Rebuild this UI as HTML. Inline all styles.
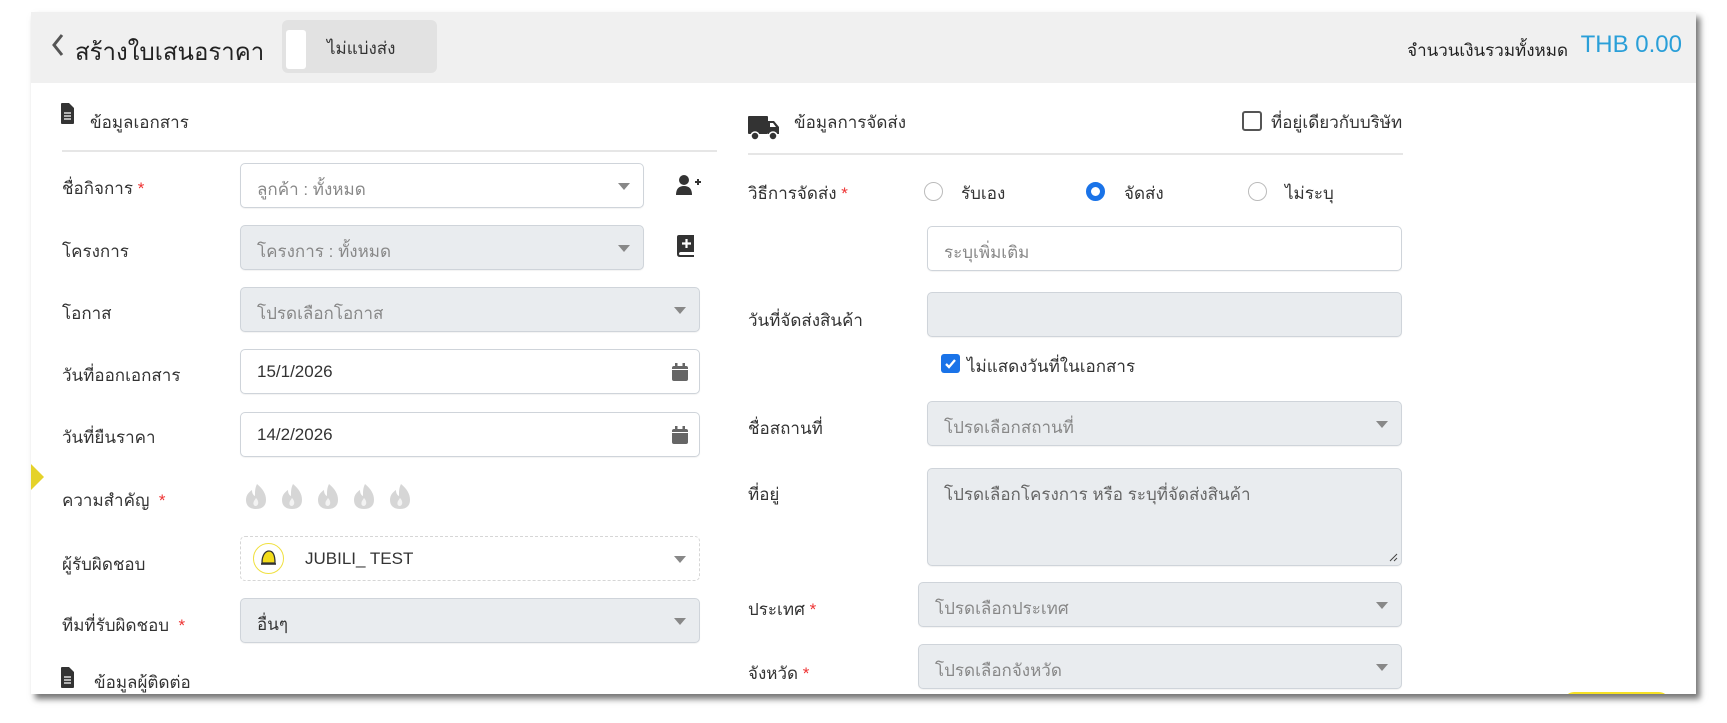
<!DOCTYPE html>
<html><head><meta charset="utf-8">
<style>
*{box-sizing:border-box;margin:0;padding:0}
body{width:1727px;height:723px;background:#fff;position:relative;overflow:hidden;font-family:"Liberation Sans","Noto Sans CJK SC",sans-serif;color:#333;font-size:17px}
.card{position:absolute;left:31px;top:12px;width:1665px;height:682px;background:#fff;box-shadow:4px 5px 6px rgba(0,0,0,.55);overflow:hidden}
.hdr{position:absolute;left:0;top:0;width:100%;height:71px;background:#f0f0f0}
.a{position:absolute;white-space:nowrap}
.in{position:absolute;border:1px solid #cfd4da;border-radius:5px;background:#fff;height:45px;box-shadow:0 1px 1px rgba(0,0,0,.05)}
.dis{background:#e9ecef}
.in span{position:absolute;left:16px;top:12px;font-size:17px;color:#888}
.in .v{color:#333}
.caret{position:absolute;right:13px;top:19px;width:0;height:0;border-left:6px solid transparent;border-right:6px solid transparent;border-top:7px solid #888}
.lbl{position:absolute;font-size:17px;color:#333;white-space:nowrap}
.req{color:#e33}
.line{position:absolute;height:2px;background:#e6e6e6}
.radio{position:absolute;width:19px;height:19px;border:1px solid #bbb;border-radius:50%;background:#fff}
</style></head><body>
<div class="card">
 <div class="hdr">
  <svg class="a" style="left:20px;top:21px" width="14" height="24" viewBox="0 0 14 24"><path d="M11 2 L3 12 L11 22" stroke="#555" stroke-width="3" fill="none"/></svg>
  <div class="a" style="left:44px;top:20px;font-size:24px;color:#222">สร้างใบเสนอราคา</div>
  <div class="a" style="left:251px;top:8px;width:155px;height:53px;background:#e2e2e2;border-radius:6px"></div>
  <div class="a" style="left:255px;top:18px;width:20px;height:39px;background:#fff;border-radius:3px"></div>
  <div class="a" style="left:296px;top:23px;font-size:17px;color:#333">ไม่แบ่งส่ง</div>
  <div class="a" style="right:128px;top:25px;font-size:17px;color:#222">จำนวนเงินรวมทั้งหมด</div>
  <div class="a" style="right:14px;top:19px;font-size:24px;color:#2a9fd8">THB 0.00</div>
 </div>
 <!-- left -->
 <svg class="a" style="left:30px;top:91px" width="13" height="21" viewBox="0 0 13 21"><path d="M0 1 Q0 0 1 0 H8 L13 5 V20 Q13 21 12 21 H1 Q0 21 0 20Z" fill="#333"/><path d="M3 10H10M3 13H10M3 16H10" stroke="#fff" stroke-width="1.3"/></svg>
 <div class="lbl" style="left:59px;top:97px">ข้อมูลเอกสาร</div>
 <div class="line" style="left:31px;top:138px;width:655px"></div>

 <div class="lbl" style="left:31px;top:163px">ชื่อกิจการ <span class="req">*</span></div>
 <div class="in" style="left:209px;top:151px;width:404px"><span>ลูกค้า : ทั้งหมด</span><i class="caret"></i></div>
 <svg class="a" style="left:645px;top:162px" width="26" height="22" viewBox="0 0 26 22"><circle cx="8" cy="6" r="5" fill="#333"/><path d="M0 21 Q0 12 8 12 Q16 12 16 21Z" fill="#333"/><path d="M19 8H25M22 5V11" stroke="#333" stroke-width="2"/></svg>

 <div class="lbl" style="left:31px;top:226px">โครงการ</div>
 <div class="in dis" style="left:209px;top:213px;width:404px"><span>โครงการ : ทั้งหมด</span><i class="caret"></i></div>
 <svg class="a" style="left:646px;top:223px" width="19" height="22" viewBox="0 0 19 22"><path d="M2 0H17V17H4Q2 17 2 19Q2 20 4 20H17V22H3Q0 22 0 19V2Q0 0 2 0Z" fill="#333"/><path d="M9.5 4V13M5 8.5H14" stroke="#fff" stroke-width="2.2"/></svg>

 <div class="lbl" style="left:31px;top:288px">โอกาส</div>
 <div class="in dis" style="left:209px;top:275px;width:460px"><span>โปรดเลือกโอกาส</span><i class="caret"></i></div>

 <div class="lbl" style="left:31px;top:350px">วันที่ออกเอกสาร</div>
 <div class="in" style="left:209px;top:337px;width:460px"><span class="v">15/1/2026</span>
  <svg style="position:absolute;right:11px;top:13px" width="16" height="18" viewBox="0 0 16 18"><rect x="0" y="3" width="16" height="15" rx="2" fill="#666"/><rect x="3" y="0" width="2.5" height="5" fill="#666"/><rect x="10.5" y="0" width="2.5" height="5" fill="#666"/><rect x="0" y="6" width="16" height="1" fill="#fff"/></svg></div>

 <div class="lbl" style="left:31px;top:412px">วันที่ยืนราคา</div>
 <div class="in" style="left:209px;top:400px;width:460px"><span class="v">14/2/2026</span>
  <svg style="position:absolute;right:11px;top:13px" width="16" height="18" viewBox="0 0 16 18"><rect x="0" y="3" width="16" height="15" rx="2" fill="#666"/><rect x="3" y="0" width="2.5" height="5" fill="#666"/><rect x="10.5" y="0" width="2.5" height="5" fill="#666"/><rect x="0" y="6" width="16" height="1" fill="#fff"/></svg></div>

 <svg class="a" style="left:0;top:452px" width="14" height="26" viewBox="0 0 14 26"><path d="M0 0L13 13L0 26Z" fill="#e5d22a"/></svg>
 <div class="lbl" style="left:31px;top:475px">ความสำคัญ <span class="req">&nbsp;*</span></div>
 <svg class="a" style="left:214px;top:471px" width="180" height="27" viewBox="0 0 180 27">
  <defs><g id="f"><path d="M12 1 C18 6 21 11 21 17 C21 23 17 26 11 26 C5 26 1 23 1 17 C1 12 4 9 7 7 C7 10 8 12 10 13 C10 8 10 5 12 1Z" fill="#d6d6d6"/><path d="M11 15 C14 18 14 22 11 23 C8 23 8 20 9 18Z" fill="#f3f3f3"/></g></defs>
  <use href="#f" x="0"/><use href="#f" x="36"/><use href="#f" x="72"/><use href="#f" x="108"/><use href="#f" x="144"/></svg>

 <div class="lbl" style="left:31px;top:539px">ผู้รับผิดชอบ</div>
 <div class="in" style="left:209px;top:524px;width:460px;border:1px dashed #d6d6d6;box-shadow:none">
  <div style="position:absolute;left:12px;top:6px;width:31px;height:31px;border:1px solid #f0e040;border-radius:50%"></div>
  <svg style="position:absolute;left:19px;top:13px" width="17" height="16" viewBox="0 0 17 16"><path d="M2 13 C2 4 6 1 9 1 C13 1 15 5 15 13Z" fill="#f3dc1a" stroke="#333" stroke-width="1.3"/><path d="M1 14H16" stroke="#333" stroke-width="1.6"/></svg>
  <span class="v" style="left:64px;top:12px">JUBILI_ TEST</span><i class="caret"></i></div>

 <div class="lbl" style="left:31px;top:600px">ทีมที่รับผิดชอบ <span class="req">&nbsp;*</span></div>
 <div class="in dis" style="left:209px;top:586px;width:460px"><span class="v">อื่นๆ</span><i class="caret"></i></div>

 <svg class="a" style="left:30px;top:655px" width="13" height="21" viewBox="0 0 13 21"><path d="M0 1 Q0 0 1 0 H8 L13 5 V20 Q13 21 12 21 H1 Q0 21 0 20Z" fill="#333"/><path d="M3 10H10M3 13H10M3 16H10" stroke="#fff" stroke-width="1.3"/></svg>
 <div class="lbl" style="left:63px;top:657px">ข้อมูลผู้ติดต่อ</div>

 <!-- right -->
 <svg class="a" style="left:717px;top:104px" width="32" height="25" viewBox="0 0 32 25"><rect x="0" y="0" width="20" height="18" rx="1" fill="#333"/><path d="M20 5H26L31 11V18H20Z" fill="#333"/><path d="M22 7H25L28 11H22Z" fill="#fff"/><circle cx="7" cy="20" r="4" fill="#333" stroke="#fff" stroke-width="1.5"/><circle cx="25" cy="20" r="4" fill="#333" stroke="#fff" stroke-width="1.5"/></svg>
 <div class="lbl" style="left:763px;top:97px">ข้อมูลการจัดส่ง</div>
 <div class="a" style="left:1211px;top:99px;width:20px;height:20px;border:2px solid #555;border-radius:3px"></div>
 <div class="lbl" style="left:1240px;top:97px">ที่อยู่เดียวกับบริษัท</div>
 <div class="line" style="left:717px;top:141px;width:655px"></div>

 <div class="lbl" style="left:717px;top:168px">วิธีการจัดส่ง <span class="req">*</span></div>
 <div class="radio" style="left:893px;top:170px"></div><div class="lbl" style="left:930px;top:168px">รับเอง</div>
 <div class="radio" style="left:1055px;top:170px;border:5px solid #1a73e8"></div><div class="lbl" style="left:1093px;top:168px">จัดส่ง</div>
 <div class="radio" style="left:1217px;top:170px"></div><div class="lbl" style="left:1254px;top:168px">ไม่ระบุ</div>

 <div class="in" style="left:896px;top:214px;width:475px"><span>ระบุเพิ่มเติม</span></div>
 <div class="lbl" style="left:717px;top:295px">วันที่จัดส่งสินค้า</div>
 <div class="in dis" style="left:896px;top:280px;width:475px"></div>
 <div class="a" style="left:910px;top:342px;width:19px;height:19px;background:#1a73e8;border-radius:3px"></div>
 <svg class="a" style="left:913px;top:345px" width="13" height="13" viewBox="0 0 13 13"><path d="M2 7L5 10L11 3" stroke="#fff" stroke-width="2.3" fill="none"/></svg>
 <div class="lbl" style="left:936px;top:341px">ไม่แสดงวันที่ในเอกสาร</div>

 <div class="lbl" style="left:717px;top:403px">ชื่อสถานที่</div>
 <div class="in dis" style="left:896px;top:389px;width:475px"><span>โปรดเลือกสถานที่</span><i class="caret"></i></div>

 <div class="lbl" style="left:717px;top:469px">ที่อยู่</div>
 <div class="in dis" style="left:896px;top:456px;width:475px;height:98px"><span style="color:#666">โปรดเลือกโครงการ หรือ ระบุที่จัดส่งสินค้า</span>
  <svg style="position:absolute;right:3px;bottom:3px" width="9" height="9" viewBox="0 0 9 9"><path d="M8 1L1 8M8 5L5 8" stroke="#444" stroke-width="1"/></svg></div>

 <div class="lbl" style="left:717px;top:584px">ประเทศ <span class="req">*</span></div>
 <div class="in dis" style="left:887px;top:570px;width:484px"><span>โปรดเลือกประเทศ</span><i class="caret"></i></div>

 <div class="lbl" style="left:717px;top:648px">จังหวัด <span class="req">*</span></div>
 <div class="in dis" style="left:887px;top:632px;width:484px"><span>โปรดเลือกจังหวัด</span><i class="caret"></i></div>

 <div class="a" style="left:1533px;top:680px;width:105px;height:20px;background:#f5e024;border-radius:10px"></div>
</div>
</body></html>
